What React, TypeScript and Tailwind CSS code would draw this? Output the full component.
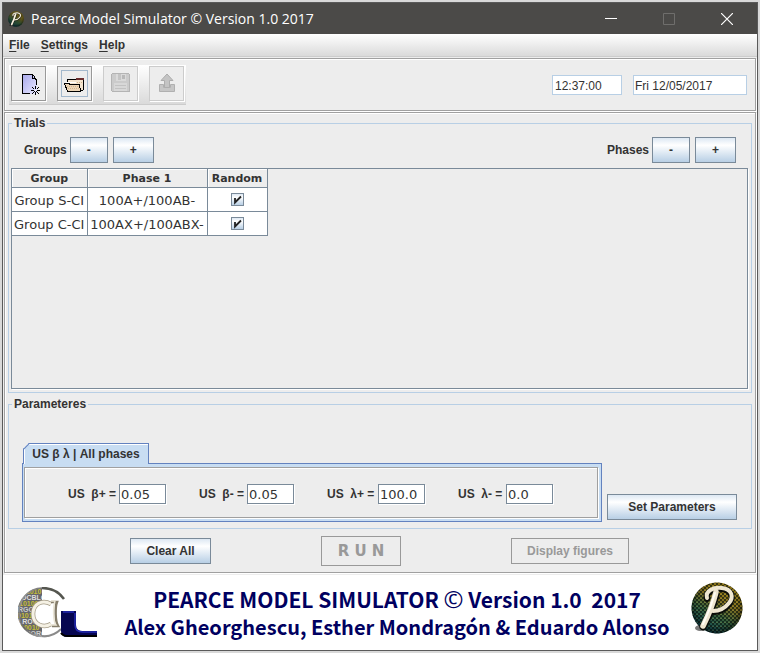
import { useId, type ReactNode } from "react";

const face = "bg-linear-to-b from-[#dde8f3] via-white via-30% to-[#b8cfe5]";

function PushButton({ children, className = "" }: { children: ReactNode; className?: string }) {
  return (
    <button
      type="button"
      className={`h-[26px] border border-[#7a8a99] text-center font-bold text-[#333] ${face} ${className}`}
    >
      {children}
    </button>
  );
}

function PearceLogo({ className }: { className: string }) {
  const id = useId();
  return (
    <svg viewBox="0 0 52 52" className={className} aria-hidden="true">
      <defs>
        <linearGradient id={`${id}g`} x1="0.85" y1="0" x2="0.3" y2="1">
          <stop offset="0" stopColor="#b08f14" />
          <stop offset="0.4" stopColor="#7d6b1e" />
          <stop offset="0.65" stopColor="#35603c" />
          <stop offset="1" stopColor="#0b4656" />
        </linearGradient>
        <radialGradient id={`${id}s`} cx="0.5" cy="0.45" r="0.55">
          <stop offset="0.7" stopColor="#000" stopOpacity="0" />
          <stop offset="1" stopColor="#000" stopOpacity="0.5" />
        </radialGradient>
        <pattern id={`${id}p`} width="4" height="4" patternUnits="userSpaceOnUse">
          <path d="M0 0L2 2L4 0M0 4L2 2L4 4" stroke="#07110d" strokeWidth="0.8" strokeOpacity="0.8" fill="none" />
          <path d="M1.2 0.2H2.8" stroke="#d8c560" strokeOpacity="0.5" strokeWidth="0.7" />
        </pattern>
      </defs>
      <circle cx="26" cy="26" r="25.5" fill={`url(#${id}g)`} />
      <circle cx="26" cy="26" r="25.5" fill={`url(#${id}p)`} />
      <circle cx="26" cy="26" r="25.5" fill={`url(#${id}s)`} />
      <ellipse cx="9" cy="46" rx="5" ry="3" fill="#222" opacity="0.6" />
      <g fill="none" strokeLinecap="round" strokeLinejoin="round">
        <path d="M25 13C22 24 17 36 12 45" stroke="#0b0d08" strokeWidth="7" />
        <path d="M16 17C14 11 22 6 31 7C41 8 43 16 38 22C34 27 28 30 22 30" stroke="#0b0d08" strokeWidth="6" />
        <path d="M25 10C22 22 17 34 12 44" stroke="#eee6d0" strokeWidth="5.5" />
        <path d="M16 16C14 9 22 5 31 6C41 7 43 15 38 21C34 26 28 29 22 29" stroke="#eee6d0" strokeWidth="4" />
        <path d="M24 11C21 22 16 34 12 42" stroke="#fffdf4" strokeWidth="2" />
      </g>
    </svg>
  );
}

function CalLogo({ className }: { className: string }) {
  return (
    <svg viewBox="0 0 82 52" className={className} aria-hidden="true">
      <defs>
        <clipPath id="cal-half">
          <path d="M24 1V50A24.500 24.500 0 0 1 24 1Z" />
        </clipPath>
        <linearGradient id="cal-ring" x1="0" y1="0" x2="1" y2="1">
          <stop offset="0" stopColor="#aaa" />
          <stop offset="0.5" stopColor="#666" />
          <stop offset="1" stopColor="#bbb" />
        </linearGradient>
      </defs>
      <g clipPath="url(#cal-half)">
        <rect width="26" height="52" fill="#66676a" />
        <g fontFamily="Liberation Sans" fontWeight="700" fontSize="7">
          <text x="0" y="7" fill="#c5bd38">001010</text>
          <text x="3" y="13" fill="#ddd">OCBLO</text>
          <text x="1" y="19" fill="#c5bd38">101001</text>
          <text x="0" y="25" fill="#ccc">RGCAL</text>
          <text x="-1" y="31" fill="#c5bd38">010100</text>
          <text x="0" y="37" fill="#ddd">LROCA</text>
          <text x="2" y="43" fill="#c5bd38">10010</text>
          <text x="2" y="49" fill="#ccc">GRORG</text>
        </g>
      </g>
      <circle cx="28" cy="27" r="13" fill="#fff" />
      <path d="M26 1C10 0 1 13 1 26C1 40 13 52 31 49" fill="none" stroke="url(#cal-ring)" strokeWidth="1.500" />
      <path d="M24 1C33 1 41 5 46 12" fill="none" stroke="#55564f" strokeWidth="2.500" />
      <path d="M24 49C33 50 39 46 43 42" fill="none" stroke="#8a8a8a" strokeWidth="2" />
      <g fill="none">
        <path d="M33 17C24 12 15 17 15 27C15 37 25 42 33 37" stroke="#a39a85" strokeWidth="4.500" />
        <path d="M33 17C24 12 15 17 15 27C15 37 25 42 33 37" stroke="#f5f1e4" strokeWidth="3" />
        <path d="M33 15H39C37 20 37 34 40 39H34" stroke="#857d6b" strokeWidth="2.500" />
        <path d="M33 14H37C35 20 35 34 38 38H33" stroke="#eae5d6" strokeWidth="1.500" />
      </g>
      <path d="M43 24H58V38Q58 44 65 44H79V50H49Q43 50 43 44Z" fill="#060650" />
      <path d="M45 25H56M57 26V38Q57 45 65 45H79" fill="none" stroke="#252bb3" strokeWidth="1.500" />
      <path d="M43 46Q45 49 50 49H79" fill="none" stroke="#000" strokeWidth="2" />
    </svg>
  );
}

function NewIcon() {
  return (
    <svg width="33" height="33" viewBox="0 0 33 33" shapeRendering="crispEdges" aria-hidden="true">
      <defs>
        <linearGradient id="sheet" x1="0" y1="0" x2="1" y2="1">
          <stop offset="0" stopColor="#a9a9ec" />
          <stop offset="1" stopColor="#e8e8ff" />
        </linearGradient>
      </defs>
      <path d="M10.500 7.500H20.500L24.500 13.500V26.500H10.500Z" fill="url(#sheet)" />
      <path d="M18 26.500H10.500V7.500H21M24.500 13V18" fill="none" stroke="#000" />
      <path d="M20.500 8V11.500H23.500V13M21.500 8.500L24.500 13" fill="none" stroke="#000" />
      <path d="M23.500 19V22M23.500 25V28M19 23.500H22M25 23.500H28M20 20L22.500 22.500M24.500 24.500L27 27M27 20L24.500 22.500M22.500 24.500L20 27" stroke="#000" />
      <rect x="23" y="23" width="1" height="1" fill="#fff" />
    </svg>
  );
}

function OpenIcon() {
  return (
    <svg width="25" height="25" viewBox="0 0 25 25" shapeRendering="crispEdges" aria-hidden="true">
      <path d="M5.500 11.500V8.500H13.500L15.500 7.500H21.500V18.500L18.500 20.500Z" fill="#f3e4ce" />
      <path d="M5.500 12V8.500H14M21.500 9V18.500L18.500 20.500" fill="none" stroke="#000" />
      <rect x="14" y="7" width="8" height="2" fill="#6b2f2f" />
      <path d="M2.500 12.500H6.500L8.500 13.500H17.500L18.500 20.500H5.500Z" fill="#ecd6b8" stroke="#000" />
      <path d="M5 15.500H17M6 17.500H18M15 11.500H20" stroke="#d2b48e" strokeDasharray="1 1" />
      <path d="M4 11.500H14" stroke="#fff" />
    </svg>
  );
}

function SaveIcon() {
  return (
    <svg width="20" height="20" viewBox="0 0 20 20" shapeRendering="crispEdges" aria-hidden="true">
      <path d="M0.500 1.500L1.500 0.500H17.500L18.500 1.500V18.500H1.500L0.500 17.500Z" fill="#cbcbcb" stroke="#b4b4b4" />
      <rect x="5" y="1" width="10" height="7" fill="#dadada" />
      <rect x="7" y="1" width="3" height="6" fill="#c4c4c4" />
      <rect x="11" y="2" width="3" height="4" fill="#b8b8b8" />
      <rect x="3" y="10" width="13" height="8" fill="#d8d8d8" />
      <path d="M4 12.500H15M4 15.500H15" stroke="#c2c2c2" />
    </svg>
  );
}

function ExportIcon() {
  return (
    <svg width="18" height="20" viewBox="0 0 18 20" aria-hidden="true">
      <path d="M1.500 11.500H5.500V14.500H12.500V11.500H16.500V18.500H1.500Z" fill="#c6c6c6" stroke="#b0b0b0" />
      <path d="M9 1L15 7.500H11.500V14.500H6.500V7.500H3Z" fill="#c4c4c4" stroke="#adadad" />
    </svg>
  );
}

function ToolButton({ label, disabled = false, children }: { label: string; disabled?: boolean; children: ReactNode }) {
  return (
    <button
      type="button"
      aria-label={label}
      disabled={disabled}
      className="grid size-[35px] place-items-center border border-[#999] bg-[#ededed] shadow-[1px_1px_0_#fff] disabled:border-[#ccc]"
    >
      {children}
    </button>
  );
}

function Stepper({ label }: { label: string }) {
  return (
    <div className="flex items-center gap-[3px]">
      <span className="font-bold">{label}</span>
      <div className="flex gap-[5px]">
        <PushButton className="w-[38px]">-</PushButton>
        <PushButton className="w-[41px]">+</PushButton>
      </div>
    </div>
  );
}

const parameters = [
  { id: "beta-plus", label: "US  β+ =", value: "0.05", width: "w-[51px]" },
  { id: "beta-minus", label: "US  β- =", value: "0.05", width: "w-[48px]" },
  { id: "lambda-plus", label: "US  λ+ =", value: "100.0", width: "w-[51px]" },
  { id: "lambda-minus", label: "US  λ- =", value: "0.0", width: "w-[48px]" },
];

const trials = [
  { group: "Group S-CI", phase: "100A+/100AB-" },
  { group: "Group C-CI", phase: "100AX+/100ABX-" },
];

const etched = "border border-[#a0a0a0] shadow-[inset_1px_1px_0_#fff,1px_1px_0_#fff]";

function RandomBox({ label }: { label: string }) {
  return (
    <span className="relative mx-auto block size-[13px]">
      <input
        type="checkbox"
        defaultChecked
        aria-label={label}
        className={`peer block size-[13px] appearance-none border border-[#7a8a99] ${face}`}
      />
      <svg viewBox="0 0 13 13" className="pointer-events-none absolute inset-0 hidden size-[13px] peer-checked:block" aria-hidden="true">
        <path d="M4 5V9.500L10 3.500" fill="none" stroke="#222" strokeWidth="1.800" />
      </svg>
    </span>
  );
}

export default function App() {
  return (
    <div className="bg-[#d9d9d9] p-[2px] pb-[3px] font-['Liberation_Sans',Arial,sans-serif] text-xs text-[#333]">
      <div className="border border-[#5a5a5a] bg-[#ededed]">
        <header className="flex h-[31px] items-center bg-[#4b4a48] pr-px pl-[5px] text-white">
          <PearceLogo className="size-4" />
          <h1 className="ml-[7px] flex-1 font-['Open_Sans','Noto_Sans',sans-serif] text-sm">
            Pearce Model Simulator © Version 1.0 2017
          </h1>
          <button type="button" aria-label="Minimize" className="grid h-full w-[58px] place-items-center">
            <svg width="12" height="12" aria-hidden="true"><path d="M0 5.500H12" stroke="#fff" /></svg>
          </button>
          <button type="button" aria-label="Maximize" disabled className="grid h-full w-[58px] place-items-center">
            <svg width="12" height="12" aria-hidden="true"><path d="M0.500 0.500H11.500V11.500H0.500Z" fill="none" stroke="#6f6e6c" /></svg>
          </button>
          <button type="button" aria-label="Close" className="grid h-full w-[58px] place-items-center">
            <svg width="12" height="12" aria-hidden="true"><path d="M0 0L12 12M12 0L0 12" stroke="#fff" strokeWidth="1.200" /></svg>
          </button>
        </header>

        <nav className="flex h-[23px] items-center gap-[11px] border-b border-[#ccc] bg-linear-to-b from-white to-[#dadada] px-[6px] font-bold">
          <button type="button"><span className="underline underline-offset-2">F</span>ile</button>
          <button type="button"><span className="underline underline-offset-2">S</span>ettings</button>
          <button type="button"><span className="underline underline-offset-2">H</span>elp</button>
        </nav>

        <div className={`mx-px mt-px flex h-[53px] items-center justify-between pr-2 pl-1 ${etched}`}>
          <div className="flex gap-[11px] border-b border-[#ccc] bg-linear-to-b from-white to-[#dadada] px-[2px] pt-px pb-[3px]">
            <ToolButton label="New"><NewIcon /></ToolButton>
            <ToolButton label="Open">
              <span className="grid size-[27px] place-items-center border border-[#a3b8cc]"><OpenIcon /></span>
            </ToolButton>
            <ToolButton label="Save" disabled><SaveIcon /></ToolButton>
            <ToolButton label="Export" disabled><ExportIcon /></ToolButton>
          </div>
          <div className="flex gap-[11px]">
            <input aria-label="Time" readOnly defaultValue="12:37:00" className="h-5 w-[70px] border border-[#b8cfe5] bg-white px-[2px] pt-[2px]" />
            <input aria-label="Date" readOnly defaultValue="Fri 12/05/2017" className="h-5 w-[114px] border border-[#b8cfe5] bg-white px-px pt-[2px]" />
          </div>
        </div>

        <main className={`mx-px mt-px px-[3px] pt-[3px] pb-[6px] ${etched}`}>
          <fieldset className="min-w-0 border border-[#b8cfe5] pr-[3px] pb-[3px] pl-[2px]">
            <legend className="ml-px px-[2px] leading-[14px] font-bold">Trials</legend>
            <div className="flex items-center justify-between pt-[7px] pr-3 pb-[5px] pl-[13px]">
              <Stepper label="Groups" />
              <Stepper label="Phases" />
            </div>
            <div className="h-[221px] border border-[#7a8a99] shadow-[1px_1px_0_#fff]">
              <table className="w-[255px] table-fixed border-collapse font-['DejaVu_Sans',Verdana,sans-serif] text-[13px]">
                <colgroup>
                  <col className="w-[75px]" />
                  <col className="w-[120px]" />
                  <col className="w-[60px]" />
                </colgroup>
                <thead>
                  <tr className="h-[18px] text-[11px] whitespace-nowrap">
                    <th className="border-r border-b border-[#7a8a99] p-0 pt-[2px] leading-4 shadow-[inset_1px_1px_0_#fff]">Group</th>
                    <th className="border-r border-b border-[#7a8a99] p-0 pt-[2px] leading-4 shadow-[inset_1px_1px_0_#fff]">Phase 1</th>
                    <th className="border-r border-b border-[#7a8a99] p-0 pt-[2px] leading-4 shadow-[inset_1px_1px_0_#fff]">Random</th>
                  </tr>
                </thead>
                <tbody>
                  {trials.map((row) => (
                    <tr key={row.group} className="h-6 bg-white text-center leading-4 whitespace-nowrap">
                      <td className="border-r border-b border-[#7a8a99] p-0 pt-[3px]">{row.group}</td>
                      <td className="border-r border-b border-[#7a8a99] p-0 pt-[3px]">{row.phase}</td>
                      <td className="border-r border-b border-[#7a8a99] p-0"><RandomBox label={`Random ${row.group}`} /></td>
                    </tr>
                  ))}
                </tbody>
              </table>
            </div>
          </fieldset>

          <fieldset className="mt-1 min-w-0 border border-[#b8cfe5] pr-[14px] pb-[6px] pl-[13px]">
            <legend className="-ml-[10px] px-[2px] leading-[14px] font-bold">Parameteres</legend>
            <div className="flex items-end gap-[5px] pt-8">
              <div className="flex-1">
                <button
                  type="button"
                  className="relative -mb-px ml-px block h-[21px] w-[126px] border border-b-0 border-[#6382bf] bg-[#c8ddf2] font-bold shadow-[inset_1px_1px_0_#fff] [clip-path:polygon(6px_0,100%_0,100%_100%,0_100%,0_6px)]"
                >
                  US β λ | All phases
                  <svg className="absolute -top-px -left-px size-[7px]" viewBox="0 0 7 7" aria-hidden="true">
                    <path d="M0 6.500L6.500 0" stroke="#6382bf" strokeWidth="1.500" />
                  </svg>
                </button>
                <div className="border border-[#6382bf] bg-[#c8ddf2] pt-[3px] pr-[3px] pb-[3px] pl-px">
                  <div className={`flex h-[51px] items-center justify-center gap-[33px] bg-[#ededed] pt-[2px] pr-px ${etched}`}>
                    {parameters.map((p) => (
                      <div key={p.id} className="flex items-center">
                        <label htmlFor={p.id} className={`font-bold whitespace-pre ${p.width}`}>{p.label}</label>
                        <input
                          id={p.id}
                          defaultValue={p.value}
                          className="h-5 w-[47px] border border-[#7a8a99] bg-white px-px pt-[2px] font-['DejaVu_Sans',Verdana,sans-serif] text-[13px] shadow-[1px_1px_0_#fff]"
                        />
                      </div>
                    ))}
                  </div>
                </div>
              </div>
              <PushButton className="mb-[2px] w-[130px]">Set Parameters</PushButton>
            </div>
          </fieldset>

          <div className="flex items-center justify-center gap-[110px] pt-[7px] pr-px">
            <PushButton className="w-[81px]">Clear All</PushButton>
            <button type="button" disabled className="h-[30px] w-[80px] border border-[#999] pt-[2px] font-['DejaVu_Sans',Verdana,sans-serif] text-[15px] font-bold text-[#999]">
              R U N
            </button>
            <button type="button" disabled className="h-[26px] w-[118px] border border-[#999] font-bold text-[#999]">Display figures</button>
          </div>
        </main>

        <footer className="mt-[2px] flex h-[75px] items-center bg-white pr-[14px] pl-[15px]">
          <CalLogo className="h-[52px] w-[82px]" />
          <div className="flex-1 pl-[3px] text-center font-['Noto_Sans_CJK_SC',sans-serif] font-bold whitespace-pre text-[#000060]">
            <p className="text-[21px] leading-7">
              PEARCE MODEL SIMULATOR <span className="font-['Open_Sans',sans-serif] text-2xl leading-none font-normal">©</span> Version 1.0  2017
            </p>
            <p className="text-xl leading-7">Alex Gheorghescu, Esther Mondragón &amp; Eduardo Alonso</p>
          </div>
          <PearceLogo className="mb-[10px] size-[52px]" />
        </footer>
      </div>
    </div>
  );
}
